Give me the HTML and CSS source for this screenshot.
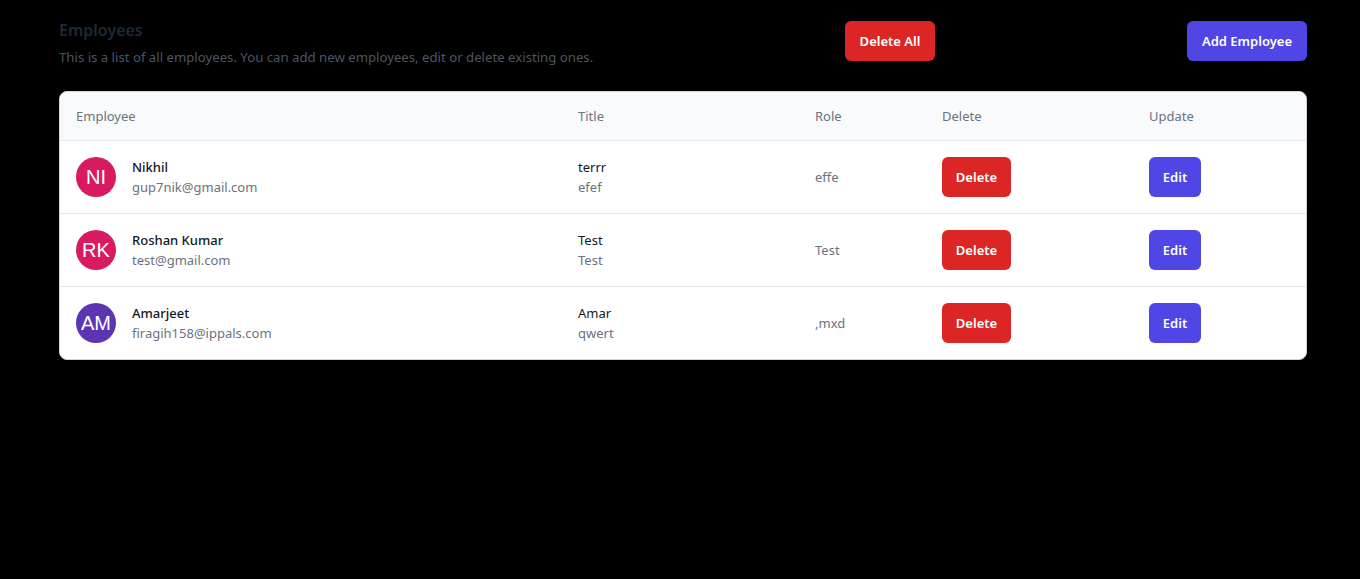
FILE: index.html
```html
<!DOCTYPE html>
<html lang="en">
<head>
<meta charset="utf-8">
<title>Employees</title>
<link rel="stylesheet" href="styles.css">
</head>
<body>
<main class="page">
  <header class="page-head">
    <div class="intro">
      <h1 class="title">Employees</h1>
      <p class="subtitle">This is a list of all employees. You can add new employees, edit or delete existing ones.</p>
    </div>
    <button class="btn btn-red btn-lg btn-delete-all">Delete All</button>
    <button class="btn btn-indigo btn-lg btn-add">Add Employee</button>
  </header>

  <section class="table">
    <div class="row head">
      <div class="cell c-emp">Employee</div>
      <div class="cell c-title">Title</div>
      <div class="cell c-role">Role</div>
      <div class="cell c-del">Delete</div>
      <div class="cell c-upd">Update</div>
    </div>

    <div class="row">
      <div class="cell c-emp">
        <div class="person">
          <span class="avatar pink">NI</span>
          <div class="lines">
            <div class="name">Nikhil</div>
            <div class="muted">gup7nik@gmail.com</div>
          </div>
        </div>
      </div>
      <div class="cell c-title"><div class="lines"><div class="strong">terrr</div><div class="muted">efef</div></div></div>
      <div class="cell c-role muted">effe</div>
      <div class="cell c-del"><button class="btn btn-red btn-sm btn-del">Delete</button></div>
      <div class="cell c-upd"><button class="btn btn-indigo btn-sm btn-edit">Edit</button></div>
    </div>

    <div class="row">
      <div class="cell c-emp">
        <div class="person">
          <span class="avatar pink">RK</span>
          <div class="lines">
            <div class="name">Roshan Kumar</div>
            <div class="muted">test@gmail.com</div>
          </div>
        </div>
      </div>
      <div class="cell c-title"><div class="lines"><div class="strong">Test</div><div class="muted">Test</div></div></div>
      <div class="cell c-role muted">Test</div>
      <div class="cell c-del"><button class="btn btn-red btn-sm btn-del">Delete</button></div>
      <div class="cell c-upd"><button class="btn btn-indigo btn-sm btn-edit">Edit</button></div>
    </div>

    <div class="row last">
      <div class="cell c-emp">
        <div class="person">
          <span class="avatar purple">AM</span>
          <div class="lines">
            <div class="name">Amarjeet</div>
            <div class="muted">firagih158@ippals.com</div>
          </div>
        </div>
      </div>
      <div class="cell c-title"><div class="lines"><div class="strong">Amar</div><div class="muted">qwert</div></div></div>
      <div class="cell c-role muted">,mxd</div>
      <div class="cell c-del"><button class="btn btn-red btn-sm btn-del">Delete</button></div>
      <div class="cell c-upd"><button class="btn btn-indigo btn-sm btn-edit">Edit</button></div>
    </div>
  </section>
</main>
</body>
</html>
```

FILE: styles.css
```css
* { box-sizing: border-box; }

html, body {
  margin: 0;
  padding: 0;
  background: #000;
}

body {
  font-family: "Noto Sans", "Open Sans", sans-serif;
  font-size: 14px;
  line-height: 20px;
  color: #111827;
}

.page {
  padding: 18px 53px 0 59px;
}

.page-head {
  display: flex;
  align-items: flex-start;
}

.intro {
  flex: 1;
}

.title {
  margin: 0;
  font-size: 16px;
  line-height: 24px;
  font-weight: 600;
  color: #1f2937;
}

.subtitle {
  margin: 5px 0 0;
  font-size: 13.2px;
  line-height: 20px;
  color: #4b5563;
}

.btn {
  display: inline-flex;
  align-items: center;
  justify-content: center;
  height: 40px;
  border: 0;
  border-radius: 6px;
  color: #fff;
  font-family: "Noto Sans", "Open Sans", sans-serif;
  font-size: 13px;
  font-weight: 600;
  padding: 0;
  cursor: pointer;
}

.btn-lg { margin-top: 3px; }

.btn-red { background: #dc2626; }
.btn-indigo { background: #4f46e5; }

.btn-delete-all { width: 90px; margin-right: 252px; }
.btn-add { width: 120px; }
.btn-del { width: 69px; }
.btn-edit { width: 52px; }

.table {
  margin-top: 24px;
  background: #fff;
  border: 1px solid #d1d5db;
  border-radius: 8px;
  overflow: hidden;
}

.row {
  display: grid;
  grid-template-columns: 502px 237px 127px 207px 1fr;
  border-bottom: 1px solid #e5e7eb;
  align-items: center;
}

.row.last { border-bottom: 0; }

.row.head {
  background: #f9fafb;
  color: #6b7280;
}

.row.head .cell {
  padding: 14px 16px;
  font-size: 13px;
}

.cell {
  padding: 16px 16px;
  font-size: 13px;
}

.person {
  display: flex;
  align-items: center;
  gap: 16px;
}

.avatar {
  width: 40px;
  height: 40px;
  border-radius: 50%;
  display: flex;
  align-items: center;
  justify-content: center;
  color: #fff;
  font-family: "Liberation Sans", Arial, sans-serif;
  font-size: 20px;
  flex: none;
}

.avatar.pink { background: #d81b60; }
.avatar.purple { background: #5e35b1; }

.name {
  font-weight: 500;
  color: #111827;
}

.strong { color: #111827; }

.muted { color: #6b7280; }
```
